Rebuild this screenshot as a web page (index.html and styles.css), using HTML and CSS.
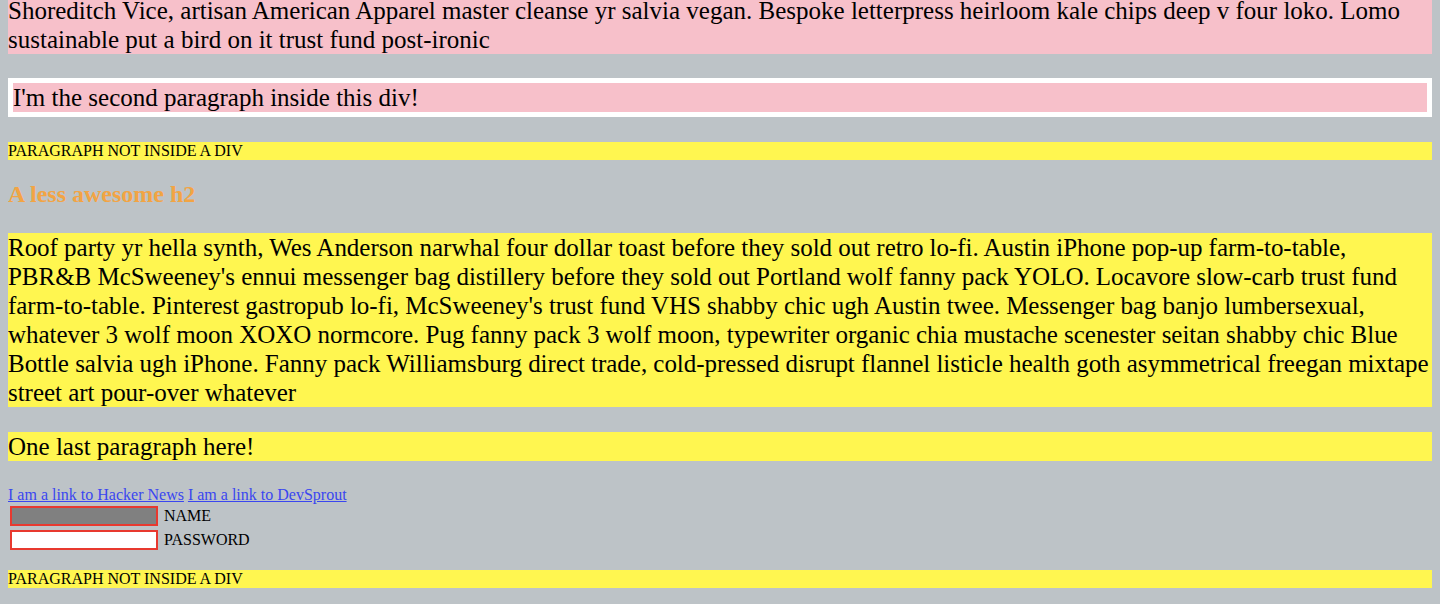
FILE: index.html
```html
<!DOCTYPE html>
<html lang="en">
<head>
<meta charset="utf-8">
<title>CSS practice</title>
<link rel="stylesheet" href="styles.css">
</head>
<body>
<div class="intro">
  <p class="big pink">Shoreditch Vice, artisan American Apparel master cleanse yr salvia vegan. Bespoke letterpress heirloom kale chips deep v four loko. Lomo sustainable put a bird on it trust fund post-ironic</p>
  <p class="big pink boxed">I'm the second paragraph inside this div!</p>
</div>
<p class="note">PARAGRAPH NOT INSIDE A DIV</p>
<h2 class="subhead">A less awesome h2</h2>
<p class="big yellow lorem">Roof party yr hella synth, Wes Anderson narwhal four dollar toast before they sold out retro lo-fi. Austin iPhone pop-up farm-to-table, PBR&amp;B McSweeney's ennui messenger bag distillery before they sold out Portland wolf fanny pack YOLO. Locavore slow-carb trust fund farm-to-table. Pinterest gastropub lo-fi, McSweeney's trust fund VHS shabby chic ugh Austin twee. Messenger bag banjo lumbersexual, whatever 3 wolf moon XOXO normcore. Pug fanny pack 3 wolf moon, typewriter organic chia mustache scenester seitan shabby chic Blue Bottle salvia ugh iPhone. Fanny pack Williamsburg direct trade, cold-pressed disrupt flannel listicle health goth asymmetrical freegan mixtape street art pour-over whatever</p>
<p class="big yellow last">One last paragraph here!</p>
<div class="links"><a href="#">I am a link to Hacker News</a> <a href="#">I am a link to DevSprout</a></div>
<form class="login">
  <div class="field"><input class="text-input name-input" type="text"> <label>NAME</label></div>
  <div class="field"><input class="text-input" type="password"> <label>PASSWORD</label></div>
</form>
<p class="note end">PARAGRAPH NOT INSIDE A DIV</p>
</body>
</html>
```

FILE: styles.css
```css
html {
  background: #bdc3c7;
}

body {
  margin: 0 8px;
  font-family: "Liberation Serif", "Times New Roman", serif;
  font-size: 16px;
  color: #000;
}

p {
  margin: 0;
}

.big {
  font-size: 25px;
  line-height: 29px;
  margin: 24px 0;
}

.lorem {
  letter-spacing: -0.03px;
}

.intro .big:first-child {
  margin-top: -4px;
}

.pink {
  background: #f7c0ca;
}

.yellow {
  background: #fff650;
}

.boxed {
  border: 5px solid #ffffff;
  margin-bottom: 25px;
}

.note {
  background: #fff650;
  font-size: 16px;
  line-height: 18px;
  margin: 16px 0;
}

.subhead {
  font-size: 24px;
  line-height: 29px;
  font-weight: bold;
  color: #f2a444;
  margin: 20px 0 24px;
}

.last {
  margin-top: 25px;
}

.links {
  line-height: 19px;
}

.links a {
  color: #3a46f0;
  text-decoration: underline;
}

.login {
  margin: 0 0 18px;
}

.field {
  height: 24px;
  display: flex;
  align-items: center;
}

.text-input {
  box-sizing: border-box;
  width: 148px;
  height: 20px;
  margin: 2px 6px 2px 2px;
  padding: 1px 2px;
  border: 2px solid #e8392f;
  background: #ffffff;
  font: inherit;
  outline: none;
}

.name-input {
  background: #808080;
}

.field label {
  font-size: 16px;
  line-height: 18px;
}

.end {
  margin-bottom: 12px;
}
```
